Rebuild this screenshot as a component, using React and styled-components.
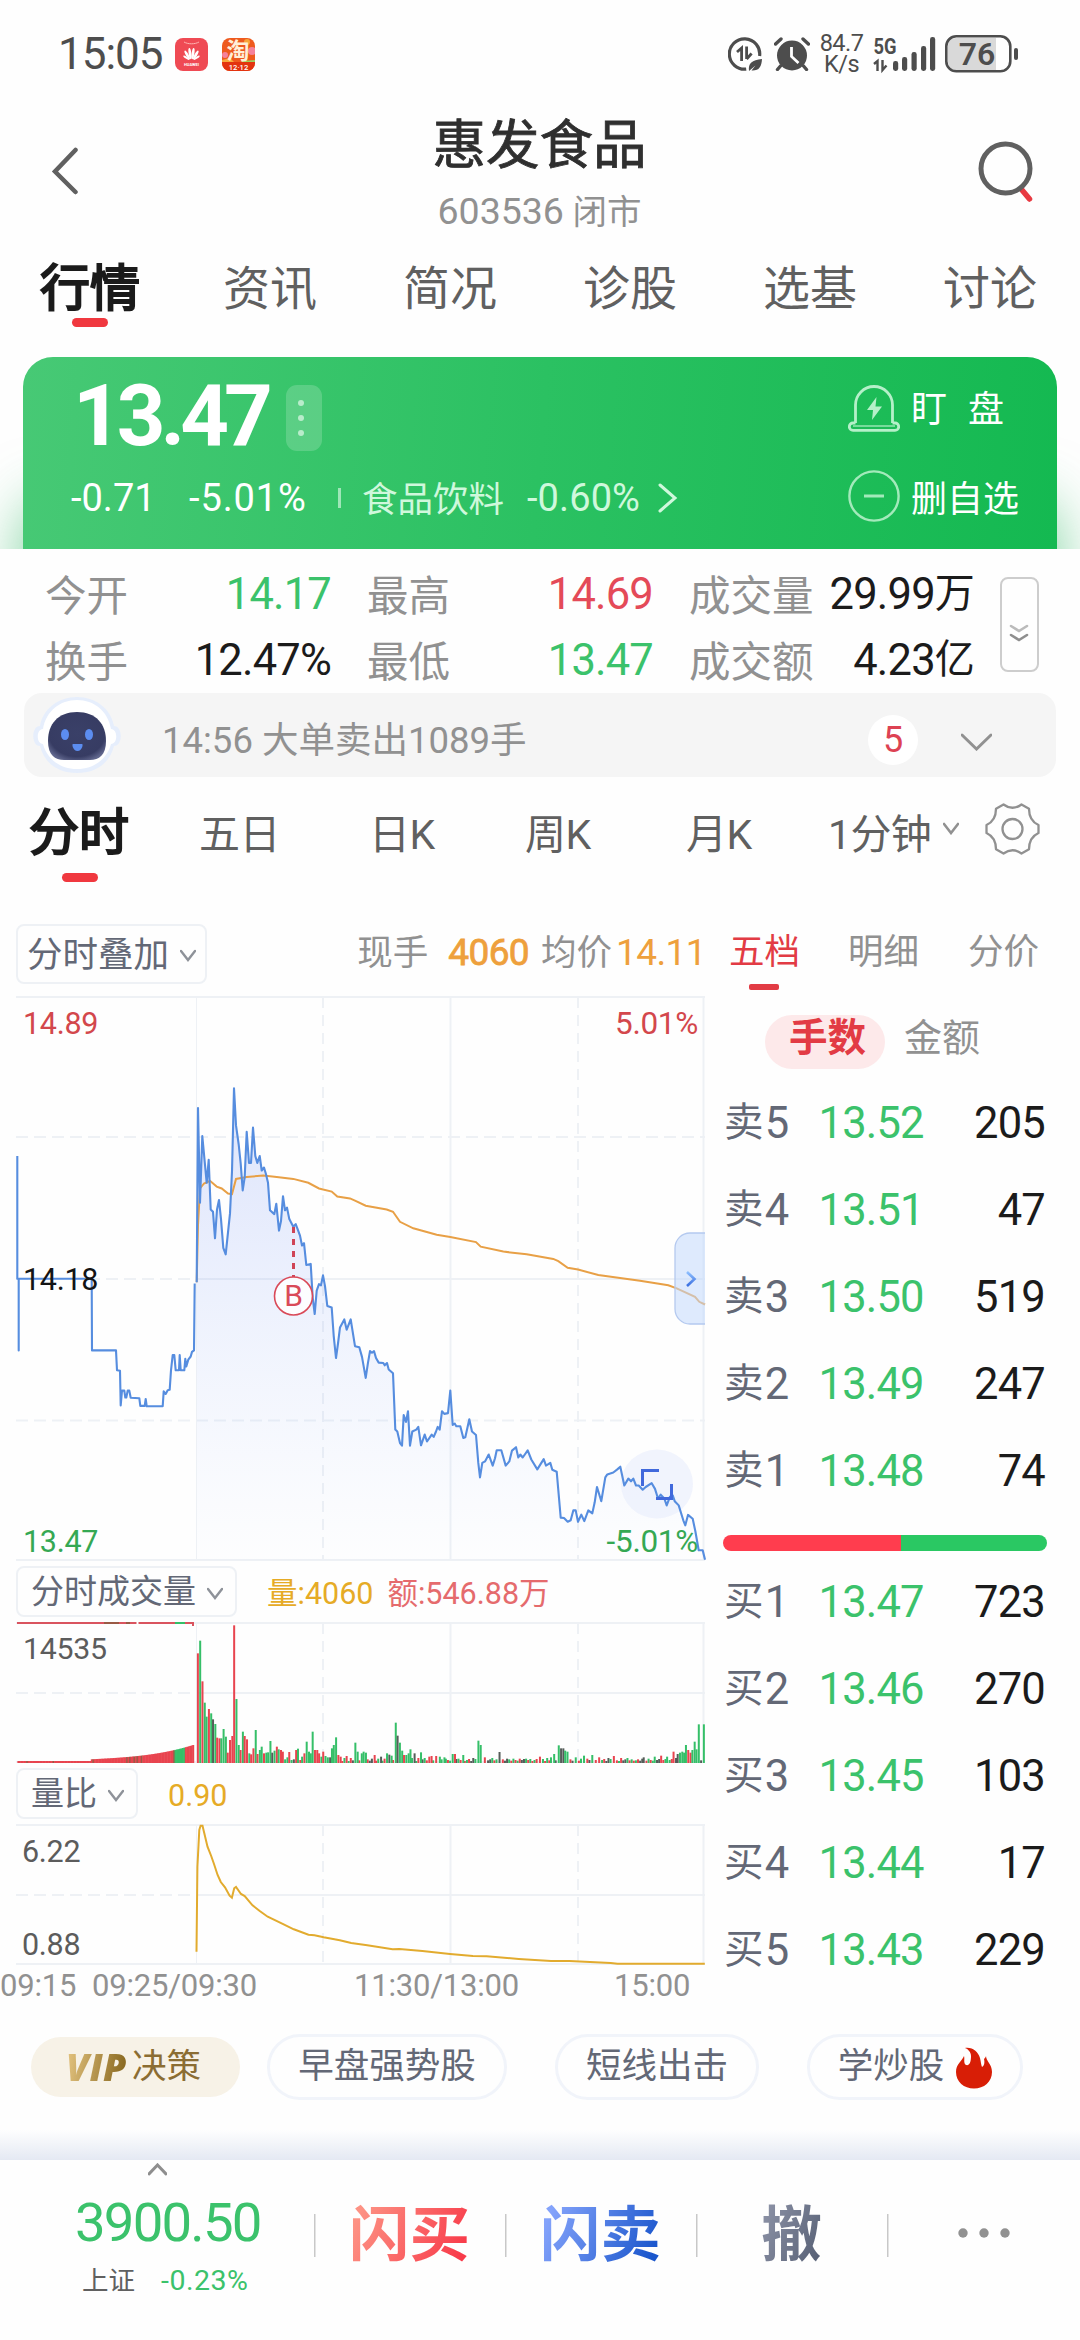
import React, { useState } from "react";
import styled, { createGlobalStyle } from "styled-components";

const RED = "#e23b44";
const GREEN = "#3bc26b";
const GRAY = "#919191";
const SLATE = "#636876";
const INK = "#1b1b1b";

const GlobalStyle = createGlobalStyle`
  * { box-sizing: border-box; }
  body {
    margin: 0;
    background: #fefefe;
    font-family: Roboto, "Noto Sans CJK SC", sans-serif;
    color: ${INK};
  }
  svg { display: block; flex: none; }
`;

const Screen = styled.div`
  width: 1080px;
  height: 2340px;
  display: flex;
  flex-direction: column;
  overflow: hidden;
  white-space: nowrap;
`;

/* ---------- status bar ---------- */

const StatusBar = styled.div`
  height: 108px;
  padding: 0 61px 0 58px;
  display: flex;
  align-items: center;
  color: #4d4d4d;
`;

const Clock = styled.span`
  width: 117px;
  font-size: 44px;
  letter-spacing: -1px;
  line-height: 50px;
`;

const AppIcons = styled.div`
  display: flex;
  gap: 14px;
`;

const StatusIcons = styled.div`
  margin-left: auto;
  display: flex;
  align-items: center;
`;

const NetSpeed = styled.div`
  width: 63px;
  text-align: center;
  font-size: 23.5px;
  line-height: 21.5px;
  letter-spacing: -0.5px;
`;

const HuaweiIcon = () => (
  <svg width="33" height="33" viewBox="0 0 33 33">
    <rect width="33" height="33" rx="8" fill="#ef4a54" />
    <path d="M9 4c4 2.4 11 2.4 15 0" fill="none" stroke="#ffb3b0" strokeWidth="1" />
    <g fill="#fff">
      <ellipse cx="15" cy="15.600" rx="1.400" ry="5.600" transform="rotate(-8 15 15.600)" />
      <ellipse cx="18" cy="15.600" rx="1.400" ry="5.600" transform="rotate(8 18 15.600)" />
      <ellipse cx="12.200" cy="17" rx="1.300" ry="5" transform="rotate(-30 12.200 17)" />
      <ellipse cx="20.800" cy="17" rx="1.300" ry="5" transform="rotate(30 20.800 17)" />
      <ellipse cx="11.300" cy="19.800" rx="1" ry="3.600" transform="rotate(-55 11.300 19.800)" />
      <ellipse cx="21.700" cy="19.800" rx="1" ry="3.600" transform="rotate(55 21.700 19.800)" />
    </g>
    <text x="16.5" y="28" fontSize="4" fontWeight="700" textAnchor="middle" fill="#fff">
      HUAWEI
    </text>
  </svg>
);

const TaobaoIcon = () => (
  <svg width="33" height="33" viewBox="0 0 33 33">
    <rect width="33" height="33" rx="8" fill="#ee5a1e" />
    <circle cx="30" cy="13" r="4" fill="#f5829b" />
    <circle cx="25" cy="4" r="3" fill="#f7a63a" />
    <circle cx="3" cy="17" r="3" fill="#f5829b" />
    <path d="M0 24h33v1a8 8 0 0 1-8 8H8a8 8 0 0 1-8-8z" fill="#e3330f" />
    <path d="M0 22l8-2 4 4H0z" fill="#f9a93c" />
    <path d="M20 23l13-1v2H20z" fill="#9ccf5f" />
    <text x="16" y="20.5" fontSize="23" fontWeight="700" textAnchor="middle" fill="#fff0d8">
      淘
    </text>
    <text x="16.5" y="31.6" fontSize="7.6" fontWeight="500" textAnchor="middle" fill="#fff">
      12·12
    </text>
  </svg>
);

const DataSaverIcon = () => (
  <svg width="34" height="34" viewBox="0 0 34 34">
    <path d="M31.6 19a15.2 15.2 0 1 0-13.4 13.1" fill="none" stroke="#4d4d4d" strokeWidth="3.2" />
    <path
      d="M9 15l4.6-4V24M18.600 9.600v12.400M18.600 22l5-5.500"
      fill="none"
      stroke="#4d4d4d"
      strokeWidth="2.8"
    />
    <path d="M21 34c-1-8 3-11 13-12-.5 8-3 12-10.500 11.500l4-5z" fill="#4d4d4d" />
  </svg>
);

const AlarmIcon = () => (
  <svg width="36" height="34" viewBox="0 0 36 34">
    <circle cx="18" cy="18.500" r="15" fill="#4d4d4d" />
    <path
      d="M1.600 7L7 2M34.400 7L29 2M6.500 29l-3 3.500M29.500 29l3 3.500"
      stroke="#4d4d4d"
      strokeWidth="3.400"
      strokeLinecap="round"
    />
    <path d="M17.500 10v9.500l7 6.500" fill="none" stroke="#fff" strokeWidth="2.800" />
  </svg>
);

const SIGNAL_BARS = [
  [20, 24],
  [29, 20],
  [38.5, 15],
  [48, 9],
  [57, 0],
];

const SignalIcon = () => (
  <svg width="64" height="34" viewBox="0 0 64 34" overflow="visible">
    <text x="0.500" y="16.500" fontSize="22" fontWeight="700" fill="#4d4d4d" textLength="23" lengthAdjust="spacingAndGlyphs">
      5G
    </text>
    <path d="M1 27l3.500-3v10M9.500 23v10l4-4.500" fill="none" stroke="#4d4d4d" strokeWidth="2.400" />
    {SIGNAL_BARS.map(([x, top]) => (
      <rect key={x} x={x} y={top} width="5.200" height={34 - top} rx="2.400" fill="#4d4d4d" />
    ))}
  </svg>
);

const BatteryIcon = () => (
  <svg width="74" height="38" viewBox="0 0 74 38">
    <path d="M11 3h40v32H11a8 8 0 0 1-8-8V11a8 8 0 0 1 8-8z" fill="#d9d9d9" />
    <rect x="1.300" y="1.300" width="64" height="35" rx="10" fill="none" stroke="#4d4d4d" strokeWidth="2.600" />
    <rect x="69" y="13" width="4" height="12" rx="2" fill="#4d4d4d" />
    <text x="32" y="30" fontSize="32" fontWeight="600" textAnchor="middle" fill="#4d4d4d">
      76
    </text>
  </svg>
);

/* ---------- header ---------- */

const Header = styled.header`
  height: 132px;
  padding: 0 44px 0 48px;
  display: flex;
  justify-content: space-between;
`;

const IconButton = styled.button`
  width: 60px;
  height: 132px;
  padding: ${(p) => p.$pad || "0"};
  border: 0;
  background: none;
`;

const TitleBlock = styled.div`
  width: 400px;
  padding: 6px 5px 0 0;
  text-align: center;
`;

const StockName = styled.h1`
  margin: 0;
  font-size: 53.5px;
  font-weight: 400;
  line-height: 63px;
  color: #2f2f2f;
  -webkit-text-stroke: 0.8px #2f2f2f;
`;

const StockCode = styled.div`
  font-size: 34.5px;
  line-height: 69px;
  color: ${GRAY};

  span {
    font-size: 37.5px;
  }
`;

/* ---------- section tabs ---------- */

const SectionTabs = styled.nav`
  height: 103px;
  display: grid;
  grid-template-columns: repeat(6, 1fr);
`;

const SectionTab = styled.div`
  position: relative;
  padding-top: 13px;
  text-align: center;
  font-size: ${(p) => (p.$active ? "50px" : "47px")};
  line-height: 72px;
  color: ${(p) => (p.$active ? INK : "#606060")};
  -webkit-text-stroke: ${(p) => (p.$active ? "2.2px" : "0")} ${INK};

  &::after {
    content: "";
    display: ${(p) => (p.$active ? "block" : "none")};
    position: absolute;
    left: 72px;
    top: 78px;
    width: 36px;
    height: 9px;
    border-radius: 5px;
    background: #f0383f;
  }
`;

/* ---------- quote card ---------- */

const QuoteArea = styled.section`
  height: 206px;
  padding: 14px 23px 0;
  overflow: hidden;
`;

const QuoteCard = styled.div`
  height: 192px;
  display: flex;
  justify-content: space-between;
  border-radius: 30px 30px 0 0;
  background: linear-gradient(95deg, #47c975 0%, #2bc162 50%, #14b951 100%);
  box-shadow: 0 145px 60px rgba(35, 180, 90, 0.6);
  color: #fff;
`;

const QuoteMain = styled.div`
  padding: 20px 0 0 48px;
`;

const PriceLine = styled.div`
  height: 78px;
  display: flex;
  align-items: center;
`;

const LastPrice = styled.span`
  width: 215px;
  padding-left: 2px;
  font-size: 85px;
  font-weight: 700;
  letter-spacing: -5px;
  line-height: 78px;
`;

const MoreButton = styled.button`
  width: 36px;
  height: 66px;
  padding: 0 0 0 12px;
  margin-top: 4px;
  border: 0;
  border-radius: 11px;
  background: rgba(255, 255, 255, 0.18);
`;

const ChangeLine = styled.div`
  height: 86px;
  display: flex;
  align-items: center;
  font-size: 38px;
  letter-spacing: 0.1px;

  svg {
    margin-left: 18px;
  }
`;

const ChangeValue = styled.span`
  width: ${(p) => p.$w}px;
  letter-spacing: ${(p) => p.$ls || 0}px;
`;

const SectorName = styled.span`
  padding: 0 0 3px 24px;
  margin-right: 23px;
  font-size: 35.5px;
  letter-spacing: 0;
  color: #cff8dc;
  background: linear-gradient(#9fe6b8, #9fe6b8) no-repeat 0 center / 3px 20px;
`;

const SectorChange = styled.span`
  color: #cff8dc;
`;

const QuoteActions = styled.div`
  width: 209px;
  padding-top: 20px;
`;

const QuoteAction = styled.div`
  height: ${(p) => p.$h}px;
  display: flex;
  align-items: center;
  gap: 11px;
  font-size: 36px;
  word-spacing: ${(p) => p.$gap || 0}px;

  span {
    padding-bottom: ${(p) => p.$lift}px;
  }
`;

/* ---------- day stats ---------- */

const Stats = styled.section`
  height: 144px;
  padding: 13px 41px 0 45px;
  display: flex;
`;

const StatColumn = styled.div`
  width: ${(p) => p.$w}px;
  margin-right: ${(p) => p.$gap}px;
`;

const Stat = styled.div`
  height: 66px;
  display: flex;
  justify-content: space-between;
  align-items: center;
`;

const StatLabel = styled.span`
  padding-bottom: 5px;
  font-size: 41.5px;
  color: ${GRAY};
`;

const StatValue = styled.span`
  font-size: 43.5px;
  line-height: 60px;
  letter-spacing: -0.8px;
  color: ${(p) => p.$color || INK};

  small {
    font-size: 40px;
    line-height: 1;
    vertical-align: 2px;
  }
`;

const ExpandButton = styled.button`
  width: 39px;
  height: 95px;
  margin: 15px 0 0 auto;
  padding: 16px 0 0 6px;
  border: 2.5px solid #cdcdcd;
  border-radius: 8px;
  background: none;
`;

/* ---------- alert strip ---------- */

const AlertStrip = styled.section`
  flex: none;
  height: 84px;
  margin: 0 24px;
  padding: 0 64px 0 8px;
  display: flex;
  align-items: center;
  border-radius: 18px;
  background: #f5f5f5;

  svg:last-child {
    margin-top: 14px;
  }
`;

const AlertText = styled.span`
  flex: 1;
  padding: 5px 0 0 40px;
  font-size: 36.5px;
  color: ${GRAY};
`;

const AlertCount = styled.span`
  width: 50px;
  height: 50px;
  margin: 10px 43px 0 0;
  border-radius: 25px;
  background: #fff;
  text-align: center;
  font-size: 36px;
  line-height: 50px;
  color: #dd4253;
`;

/* ---------- period tabs ---------- */

const PeriodTabs = styled.nav`
  flex: none;
  height: 123px;
  padding-left: 29px;
  display: grid;
  grid-template-columns: 170px 170px 156px 161px 142px 115px 42px 1fr;
`;

const PeriodTab = styled.div`
  position: relative;
  padding-top: ${(p) => (p.$active ? 20 : 22)}px;
  font-size: ${(p) => (p.$active ? "50px" : "41px")};
  letter-spacing: ${(p) => (p.$active ? 0 : -0.6)}px;
  line-height: 72px;
  color: ${(p) => (p.$active ? INK : "#606060")};
  -webkit-text-stroke: ${(p) => (p.$active ? "2.2px" : "0")} ${INK};

  &::after {
    content: "";
    display: ${(p) => (p.$active ? "block" : "none")};
    position: absolute;
    left: 33px;
    top: 96px;
    width: 36px;
    height: 9px;
    border-radius: 5px;
    background: #f0383f;
  }
`;

const PeriodIcon = styled.div`
  padding-top: ${(p) => p.$top}px;
`;

/* ---------- chart column ---------- */

const Body = styled.main`
  flex: none;
  height: 1112px;
  display: grid;
  grid-template-columns: 706px 1fr;
`;

const ChartColumn = styled.section`
  display: flex;
  flex-direction: column;
`;

const ChartToolbar = styled.div`
  height: ${(p) => p.$h}px;
  padding: ${(p) => (p.$h === 96 ? "24px" : "4px")} 0 0 16px;
  display: flex;
  align-items: flex-start;
`;

const Dropdown = styled.button`
  width: ${(p) => p.$w}px;
  height: ${(p) => (p.$large ? 60 : 51)}px;
  padding: 0 ${(p) => (p.$large ? 9 : 12)}px 0 ${(p) => (p.$large ? 9 : 13)}px;
  display: flex;
  align-items: center;
  justify-content: space-between;
  border: 2px solid #eef1f5;
  border-radius: 8px;
  background: none;
  font-family: inherit;
  font-size: ${(p) => (p.$large ? 35.5 : 33)}px;
  color: ${SLATE};

  span {
    padding-bottom: 5px;
  }

  svg {
    margin-top: 3px;
  }
`;

const Legend = styled.div`
  margin-left: ${(p) => p.$left}px;
  font-size: 35.5px;
  line-height: ${(p) => (p.$small ? 52 : 58)}px;
  color: ${GRAY};
`;

const LegendNumber = styled.span`
  font-size: 37px;
  letter-spacing: -0.6px;
  -webkit-text-stroke: ${(p) => (p.$strong ? 0.8 : 0)}px #eea03c;
  color: #eea03c;
  margin: 0 ${(p) => (p.$strong ? 12 : 0)}px 0 ${(p) => (p.$strong ? 20 : 4)}px;
`;

const IndicatorValue = styled.span`
  margin-right: 14px;
  font-size: 30.5px;
  color: ${(p) => p.$color};
`;

const TimeAxis = styled.div`
  padding-top: 1px;
  display: grid;
  grid-template-columns: 92px 262px 260px 1fr;
  font-size: 31px;
  line-height: 38px;
  letter-spacing: -0.2px;
  color: ${GRAY};
`;

const ChartLabel = styled.text`
  font-size: ${(p) => p.$size || 30.5}px;
  letter-spacing: -0.3px;
  fill: ${(p) => p.$color};
  text-anchor: ${(p) => p.$anchor || "start"};
`;

const GRID_X = [196.5, 323, 450.5, 578, 703.5];

// samples are kept on an oversampled grid, sx/sy bring them to pixels
const toPoints = (samples, sx, sy, oy) =>
  samples.map(([x, y]) => `${(x / sx).toFixed(1)},${((y - oy) / sy).toFixed(1)}`).join(" ");

const AUCTION = [
  [52, 460], [52, 781], [56, 781], [56, 968], [56, 781], [275, 781], [276, 968], [348, 968],
  [351, 1020], [360, 1021], [362, 1112], [366, 1073], [373, 1073], [376, 1091], [379, 1091],
  [383, 1073], [388, 1073], [392, 1092], [418, 1093], [421, 1113], [434, 1113], [437, 1095],
  [440, 1114], [488, 1114], [491, 1075], [497, 1082], [503, 1072], [509, 1071], [513, 1020],
  [518, 980], [523, 980], [527, 1020], [537, 1020], [539, 980], [542, 1020], [553, 1020],
  [556, 990], [559, 1010], [565, 992], [572, 984], [576, 972], [582, 968], [584, 793],
];

const MORNING = [
  [590, 790], [594, 335], [600, 582], [607, 408], [620, 530], [626, 470], [632, 600], [639, 606],
  [645, 675], [651, 600], [657, 575], [663, 625], [670, 700], [677, 717], [690, 610], [696, 500],
  [702, 283], [708, 380], [716, 430], [722, 480], [728, 550], [734, 515], [740, 397], [747, 478],
  [753, 478], [759, 386], [766, 460], [772, 478], [779, 460], [785, 498], [792, 490], [798, 508],
  [804, 530], [810, 602], [823, 612], [829, 585], [837, 655], [843, 630], [849, 565], [855, 602],
  [861, 595], [868, 625], [880, 645], [887, 638], [893, 652], [900, 668], [906, 694], [912, 688],
  [919, 745], [932, 742], [938, 830], [944, 873], [950, 812], [957, 795], [963, 798], [969, 772],
  [975, 800], [982, 852], [995, 856], [1001, 930], [1008, 988], [1014, 950], [1020, 908],
  [1033, 887], [1040, 914], [1052, 887],
];

const LATE = [
  [45, 957], [58, 960], [66, 985], [77, 1040], [84, 1000], [90, 970], [96, 974], [102, 970],
  [108, 988], [116, 1000], [130, 1001], [134, 1007], [141, 1001], [146, 1018], [159, 1028],
  [166, 1175], [172, 1180], [180, 1210], [186, 1217], [191, 1137], [198, 1155], [204, 1127],
  [210, 1217], [217, 1180], [229, 1175], [235, 1168], [243, 1216], [254, 1188], [261, 1206],
  [275, 1188], [281, 1194], [288, 1180], [293, 1168], [299, 1175], [306, 1127], [313, 1134],
  [324, 1132], [331, 1073], [338, 1163], [344, 1159], [349, 1166], [361, 1166], [370, 1197],
  [376, 1195], [388, 1148], [396, 1180], [408, 1189], [415, 1262], [420, 1300], [427, 1262],
  [435, 1258], [446, 1240], [458, 1269], [465, 1250], [470, 1229], [484, 1229], [497, 1269],
  [508, 1258], [516, 1230], [528, 1221], [535, 1248], [541, 1240], [548, 1248], [563, 1229],
  [574, 1253], [592, 1279], [611, 1252], [618, 1269], [631, 1262], [637, 1280], [650, 1285],
  [656, 1345], [662, 1405], [672, 1406], [683, 1416], [692, 1412], [700, 1386], [707, 1386],
  [714, 1416], [724, 1397], [733, 1414], [745, 1386], [757, 1394], [764, 1365], [771, 1325],
  [784, 1362], [796, 1300], [802, 1292], [820, 1287], [832, 1279], [841, 1272], [853, 1321],
  [865, 1303], [873, 1310], [880, 1303], [888, 1321], [896, 1321], [908, 1332], [917, 1325],
  [935, 1315], [945, 1330], [954, 1355], [962, 1345], [973, 1355], [980, 1373], [990, 1350],
  [998, 1347], [1004, 1362], [1016, 1373], [1030, 1412], [1036, 1425], [1044, 1398], [1058, 1408],
  [1066, 1440], [1076, 1490], [1088, 1490], [1095, 1515],
].map(([x, y]) => [x + 1020, y]);

const AVERAGE = [
  [590, 790], [594, 640], [600, 545], [612, 532], [630, 525], [650, 540], [665, 545], [684, 558],
  [696, 560], [708, 520], [740, 515], [790, 511], [830, 515], [880, 520], [925, 530], [957, 545],
  [995, 553], [1012, 566], [1050, 571], [1065, 577], [1097, 590], [1160, 600], [1179, 606],
  [1200, 632], [1240, 649], [1310, 666], [1351, 672], [1428, 685], [1442, 697], [1510, 710],
  [1580, 717], [1660, 729], [1675, 735], [1703, 752], [1734, 757], [1795, 771], [1920, 786],
  [2005, 798], [2030, 806], [2085, 828], [2098, 841], [2115, 848],
];

const RATIO = [
  [428, 1175], [430, 920], [434, 810], [437, 797], [441, 797], [445, 820], [452, 860], [460, 888],
  [466, 912], [474, 945], [481, 966], [490, 982], [500, 1007], [505, 1013], [510, 985], [514, 981],
  [525, 1002], [533, 1008], [550, 1036], [565, 1052], [583, 1070], [610, 1088], [640, 1108],
  [672, 1124], [685, 1126], [705, 1132], [740, 1141], [765, 1149], [800, 1156], [855, 1168],
  [870, 1167], [920, 1173], [980, 1182], [1030, 1188], [1060, 1189], [1130, 1197], [1200, 1203],
  [1240, 1203], [1330, 1209], [1345, 1211], [1535, 1211],
];

// [x, top, colour] of the minutes with notable turnover
const PEAKS = [
  [431, 280, "r"], [436, 242, "g"], [441, 364, "r"], [446, 428, "g"], [450, 470, "g"],
  [455, 447, "r"], [460, 460, "g"], [464, 478, "k"], [469, 492, "g"], [473, 533, "r"],
  [478, 535, "r"], [482, 535, "g"], [487, 507, "g"], [492, 530, "g"], [496, 578, "r"],
  [501, 540, "r"], [506, 528, "r"], [510, 196, "r"], [515, 417, "g"], [520, 555, "g"],
  [524, 570, "r"], [529, 515, "g"], [533, 528, "r"], [538, 538, "r"], [543, 580, "g"],
  [547, 583, "r"], [552, 565, "r"], [557, 510, "g"], [561, 582, "r"], [566, 570, "g"],
  [570, 560, "g"], [575, 580, "r"], [580, 578, "g"], [584, 577, "g"], [589, 543, "g"],
  [593, 578, "k"], [598, 572, "g"], [603, 560, "r"], [607, 568, "g"], [612, 570, "r"],
  [616, 575, "r"], [621, 598, "g"], [626, 592, "g"], [630, 576, "r"], [635, 600, "g"],
  [640, 598, "k"], [645, 570, "r"], [649, 566, "g"], [654, 600, "r"], [658, 590, "g"],
  [663, 580, "r"], [668, 545, "g"], [673, 575, "g"], [677, 580, "g"], [681, 515, "g"],
  [686, 570, "r"], [691, 570, "r"], [695, 580, "r"], [700, 590, "g"], [704, 575, "r"],
  [709, 588, "g"], [714, 592, "g"], [719, 592, "k"], [723, 565, "g"], [727, 555, "g"],
  [732, 532, "g"], [737, 585, "r"], [742, 590, "r"], [755, 588, "r"], [774, 548, "g"],
  [779, 575, "g"], [788, 580, "g"], [792, 575, "g"], [797, 578, "g"], [816, 585, "r"],
  [830, 590, "k"], [843, 580, "g"], [848, 584, "k"], [853, 587, "g"], [862, 488, "g"],
  [866, 527, "k"], [871, 548, "g"], [876, 572, "g"], [880, 585, "r"], [885, 585, "g"],
  [890, 580, "g"], [894, 568, "g"], [903, 580, "k"], [917, 577, "g"], [935, 590, "r"],
  [940, 588, "r"], [950, 588, "r"], [958, 590, "g"], [968, 592, "g"], [986, 582, "g"],
  [991, 582, "r"], [1009, 585, "g"], [1042, 542, "g"], [1047, 555, "g"], [1056, 592, "r"],
  [1088, 576, "k"], [1176, 590, "r"], [1200, 592, "g"], [1207, 582, "g"], [1217, 556, "g"],
  [1222, 565, "k"], [1227, 565, "k"], [1231, 572, "g"], [1236, 575, "g"], [1254, 592, "g"],
  [1272, 587, "g"], [1290, 585, "g"], [1305, 592, "r"], [1337, 588, "r"], [1402, 592, "k"],
  [1426, 590, "g"], [1440, 587, "r"], [1453, 590, "g"], [1467, 575, "r"], [1476, 582, "k"],
  [1481, 578, "g"], [1486, 575, "g"], [1490, 578, "g"], [1494, 555, "g"], [1499, 570, "r"],
  [1504, 578, "r"], [1508, 570, "g"], [1513, 545, "g"], [1517, 568, "g"], [1522, 493, "g"],
  [1527, 601, "k"], [1533, 493, "g"],
];

const BAR_COLORS = { r: "#e8444f", g: "#35bf68", k: "#555d59", b: "#9a5a45" };

const QUIET_TOPS = [597, 602, 594, 600, 598, 603, 596, 601];
const QUIET_COLORS = "grrgkrgrgkrg";

const quietBars = () => {
  const bars = [];
  for (let i = 0, x = 741; x < 1475; i += 1, x += 4.6) {
    if (!PEAKS.some((p) => Math.abs(p[0] - x) < 3)) {
      bars.push([x, QUIET_TOPS[(i * 5 + (i >> 2)) % 8], QUIET_COLORS[(i * 7 + (i >> 1)) % 12]]);
    }
  }
  return bars;
};

const auctionBars = () => {
  const bars = [];
  for (let x = 40; x < 423; x += 3.2) {
    const t = Math.max(0, (x - 198) / 223);
    const top = x < 198 ? 603 : 598 - t * 16 - t * t * t * 27;
    let color = "r";
    if (x > 380 && x < 402) color = "g";
    else if ((x > 268 && x < 312) || x % 29 < 3) color = Math.round(x) % 2 ? "b" : "r";
    bars.push([x, top, color]);
  }
  return bars;
};

const VOLUME = [...auctionBars(), ...quietBars(), ...PEAKS];

function ChartGrid({ height, rows, dashedMiddle }) {
  return (
    <g stroke="#eef1f5" strokeWidth="2">
      <path d={`M16 1H705M16 ${height - 2}H705`} />
      {GRID_X.map((x, i) => (
        <path
          key={x}
          d={`M${x} 1V${height - 1}`}
          strokeDasharray={i === 1 || i === 3 ? "11 7" : undefined}
          strokeWidth={i === 0 ? 1 : 2}
        />
      ))}
      {rows.map((y, i) => (
        <React.Fragment key={y}>
          <path d={`M16 ${y}H196`} strokeDasharray="12 6" />
          <path d={`M196 ${y}H705`} strokeDasharray={dashedMiddle && i !== 1 ? "12 6" : undefined} />
        </React.Fragment>
      ))}
    </g>
  );
}

function PriceChart() {
  const session = toPoints([...MORNING, ...LATE], 3, 2.613, 42);
  return (
    <svg width="706" height="566" viewBox="0 0 706 566">
      <defs>
        <linearGradient id="priceFill" gradientUnits="userSpaceOnUse" x1="0" y1="100" x2="0" y2="560">
          <stop offset="0" stopColor="#5b7cf0" stopOpacity="0.2" />
          <stop offset="1" stopColor="#7fa6ff" stopOpacity="0.01" />
        </linearGradient>
        <linearGradient id="handleArrow" x1="0" y1="0" x2="0" y2="1">
          <stop offset="0" stopColor="#8fc0ff" />
          <stop offset="1" stopColor="#3a6fe0" />
        </linearGradient>
      </defs>
      <ChartGrid height={566} rows={[141, 283, 424.5]} dashedMiddle />
      <polygon points={`197,564 ${session} 705,564`} fill="url(#priceFill)" />
      <polyline points={toPoints(AVERAGE, 3, 2.613, 42)} fill="none" stroke="#e8a046" strokeWidth="2" />
      <ellipse cx="657" cy="488" rx="36" ry="34.500" fill="#e9eefc" fillOpacity="0.65" />
      <g fill="none" stroke="#568ddf" strokeWidth="2.1" strokeLinejoin="round">
        <polyline points={toPoints(AUCTION, 3, 2.613, 42)} />
        <polyline points={session} />
      </g>
      <path d="M642.500 490V474.500H659M656 502.500H671.500V488" fill="none" stroke="#4169dc" strokeWidth="3" />
      <path
        d="M705 237H690a15 15 0 0 0-15 15v61a15 15 0 0 0 15 15h15"
        fill="#c3d8fb"
        fillOpacity="0.55"
        stroke="#b4c9ef"
        strokeWidth="1.300"
      />
      <path d="M687 276l7.500 7-7.500 7" fill="none" stroke="url(#handleArrow)" strokeWidth="2.600" />
      <path d="M293.500 231V281" stroke="#cf4456" strokeWidth="3" strokeDasharray="6 6" />
      <circle cx="293.500" cy="300" r="19" fill="#fff" fillOpacity="0.85" stroke="#d94a59" strokeWidth="1.600" />
      <ChartLabel x="293.500" y="310" $size={30} $anchor="middle" $color="#d94a59">B</ChartLabel>
      <ChartLabel x="23" y="38" $color="#d3474c">14.89</ChartLabel>
      <ChartLabel x="23" y="294" $color="#141414">14.18</ChartLabel>
      <ChartLabel x="23" y="556" $color="#35a853">13.47</ChartLabel>
      <ChartLabel x="698" y="38" $size={31.5} $anchor="end" $color="#d3474c">5.01%</ChartLabel>
      <ChartLabel x="698" y="556" $size={31.5} $anchor="end" $color="#35a853">-5.01%</ChartLabel>
    </svg>
  );
}

function VolumeChart() {
  return (
    <svg width="706" height="142" viewBox="0 0 706 142">
      <ChartGrid height={142} rows={[71]} />
      {VOLUME.map(([x, top, color], i) => (
        <rect
          key={i}
          x={x / 2.178 - 1}
          y={(top - 186) / 3}
          width="2"
          height={(609 - top) / 3}
          fill={BAR_COLORS[color]}
        />
      ))}
      <g strokeWidth="2" fill="none">
        <path d="M17 1H193V4" stroke="#d9545f" />
        <path d="M104 1h15M126 1h4" stroke="#9a5a45" />
        <path d="M175 1h10" stroke="#35bf68" />
        <path d="M136.500 1h2" stroke="#fff" />
      </g>
      <ChartLabel x="23" y="37" $size={30.3} $color="#5c5c5c">14535</ChartLabel>
    </svg>
  );
}

function RatioChart() {
  return (
    <svg width="706" height="142" viewBox="0 0 706 142">
      <ChartGrid height={142} rows={[71]} />
      <polyline points={toPoints(RATIO, 2.178, 3, 792)} fill="none" stroke="#e2ab2e" strokeWidth="2" />
      <ChartLabel x="22" y="38" $color="#5c5c5c">6.22</ChartLabel>
      <ChartLabel x="22" y="131" $color="#5c5c5c">0.88</ChartLabel>
    </svg>
  );
}

/* ---------- order book ---------- */

const OrderBook = styled.section`
  display: flex;
  flex-direction: column;
  padding: 0 33px 0 17px;
`;

const BookTabs = styled.div`
  height: 104px;
  padding-left: 6px;
  display: grid;
  grid-template-columns: 119px 120px 1fr;
`;

const BookTab = styled.div`
  position: relative;
  font-size: 35.5px;
  line-height: 104px;
  color: ${(p) => (p.$active ? RED : GRAY)};

  &::after {
    content: "";
    display: ${(p) => (p.$active ? "block" : "none")};
    position: absolute;
    left: 20px;
    top: 84px;
    width: 30px;
    height: 6px;
    border-radius: 2px;
    background: ${RED};
  }
`;

const UnitSwitch = styled.div`
  height: 76px;
  padding: 11px 0 0 42px;
  display: flex;
  gap: 19px;
`;

const Unit = styled.span`
  height: 54px;
  padding: 0 ${(p) => (p.$active ? 24 : 0)}px;
  width: ${(p) => (p.$active ? "120px" : "auto")};
  border-radius: 27px;
  background: ${(p) => (p.$active ? "#fde9ea" : "none")};
  font-size: ${(p) => (p.$active ? 38.5 : 38)}px;
  font-weight: ${(p) => (p.$active ? 700 : 400)};
  line-height: 46px;
  color: ${(p) => (p.$active ? RED : GRAY)};
`;

const Level = styled.div`
  height: 87px;
  padding-right: 2px;
  display: grid;
  grid-template-columns: 95.5px 1fr auto;
  align-items: center;
  font-size: 43.5px;
  line-height: 60px;
  letter-spacing: -0.8px;
`;

const LevelName = styled.span`
  padding-left: 1px;
  color: ${SLATE};

  small {
    font-size: 39.5px;
    line-height: 1;
    vertical-align: 2px;
    margin-right: 2px;
  }
`;

const LevelPrice = styled.span`
  color: ${GREEN};
`;

const Balance = styled.div`
  height: 16px;
  margin: 20px 0 8.5px;
  border-radius: 8px;
  background: linear-gradient(90deg, #ff3d4e 55%, #2ac863 55%);
`;

const ASKS = [
  [5, "13.52", 205],
  [4, "13.51", 47],
  [3, "13.50", 519],
  [2, "13.49", 247],
  [1, "13.48", 74],
];

const BIDS = [
  [1, "13.47", 723],
  [2, "13.46", 270],
  [3, "13.45", 103],
  [4, "13.44", 17],
  [5, "13.43", 229],
];

const BookLevels = ({ side, levels }) =>
  levels.map(([n, price, lots]) => (
    <Level key={n}>
      <LevelName>
        <small>{side}</small>
        {n}
      </LevelName>
      <LevelPrice>{price}</LevelPrice>
      <span>{lots}</span>
    </Level>
  ));

/* ---------- chips and bottom bar ---------- */

const Chips = styled.section`
  flex: none;
  height: 118px;
  padding: 22px 0 0 31px;
  display: flex;
  align-items: flex-start;
`;

const Chip = styled.div`
  width: ${(p) => p.$w}px;
  height: 66px;
  margin-left: ${(p) => p.$left || 48}px;
  padding-bottom: 3px;
  display: flex;
  align-items: center;
  justify-content: center;
  gap: 12px;
  border: 3px solid #f1f4fa;
  border-radius: 33px;
  font-size: 35.5px;
  line-height: 50px;
  color: ${SLATE};

  svg {
    margin-top: 4px;
  }
`;

const VipChip = styled.div`
  width: 209px;
  height: 60px;
  margin-top: 3px;
  padding: 0 0 3px 35px;
  display: flex;
  align-items: center;
  border-radius: 30px;
  background: #f7f2e7;
  font-size: 34.5px;
  line-height: 50px;
  color: #8b6d33;
`;

const VipMark = styled.b`
  width: 66px;
  padding: 2px 3px 0 0;
  font-family: "Open Sans", sans-serif;
  font-size: 37.5px;
  font-weight: 800;
  font-style: italic;
  letter-spacing: 0.3px;
  background: linear-gradient(100deg, #e2c27e 5%, #8a6a22 85%);
  -webkit-background-clip: text;
  background-clip: text;
  color: transparent;
`;

const Fade = styled.div`
  flex: none;
  height: 30px;
  background: linear-gradient(#fefefe, #e4e9f3);
`;

const BottomBar = styled.footer`
  flex: none;
  height: 180px;
  display: grid;
  grid-template-columns: 314px 191px 191px 191px 1fr;
`;

const IndexQuote = styled.div`
  padding: 3px 0 0 75px;
`;

const IndexCaret = styled.div`
  height: 26px;
  padding-left: 73px;
`;

const IndexValue = styled.div`
  font-size: 54.5px;
  letter-spacing: -1.8px;
  line-height: 66px;
  color: ${GREEN};
`;

const IndexInfo = styled.div`
  padding-left: 7px;
  display: flex;
  gap: 26px;
  font-size: 26.5px;
  line-height: 52px;
  color: #606060;

  span {
    font-size: 28.5px;
    letter-spacing: 0.5px;
    color: ${GREEN};
  }
`;

const TradeCell = styled.div`
  padding-bottom: ${(p) => (p.$menu ? 34 : 29)}px;
  display: flex;
  align-items: center;
  justify-content: center;
  background: linear-gradient(#c8c8c8, #c8c8c8) no-repeat 0 54px / 1.5px 43px;
`;

const TradeButton = styled.span`
  font-size: 60.5px;
  font-weight: 700;
  line-height: 70px;
  background: linear-gradient(115deg, ${(p) => p.$from} 10%, ${(p) => p.$to} 90%);
  -webkit-background-clip: text;
  background-clip: text;
  color: transparent;
`;

/* ---------- small icons ---------- */

const Caret = ({ w = 16, h = 9, color = "#8e9299", stroke = 2.4, up }) => (
  <svg width={w} height={h + 4} viewBox={`0 0 ${w} ${h + 4}`}>
    <path
      d={up ? `M1 ${h + 2}L${w / 2} 2L${w - 1} ${h + 2}` : `M1 2L${w / 2} ${h + 2}L${w - 1} 2`}
      fill="none"
      stroke={color}
      strokeWidth={stroke}
      strokeLinecap="round"
    />
  </svg>
);

const RobotIcon = () => (
  <svg width="90" height="78" viewBox="0 0 90 78">
    <defs>
      <radialGradient id="robotFace" cx="0.5" cy="0.45" r="0.6">
        <stop offset="0" stopColor="#3a4068" />
        <stop offset="0.8" stopColor="#373c63" />
        <stop offset="1" stopColor="#5f658c" />
      </radialGradient>
    </defs>
    <path
      d="M45 1C64 1 79 13 82 30c9 0 9 20 0 20-4 17-18 27-37 27S12 67 8 50c-9 0-9-20 0-20C11 13 26 1 45 1z"
      fill="#e6eefc"
    />
    <path
      d="M45 4C62 4 76 15 79 33c7 0 7 15 0 15-4 15-17 25-34 25S15 63 11 48c-7 0-7-15 0-15C14 15 28 4 45 4z"
      fill="#fff"
    />
    <path
      d="M45 16c19 0 29 12 29 29 0 14-7 19-16 19H32c-9 0-16-5-16-19 0-17 10-29 29-29z"
      fill="url(#robotFace)"
    />
    <ellipse cx="33" cy="38.500" rx="4" ry="5.500" fill="#5c8df0" />
    <ellipse cx="57" cy="38.500" rx="4" ry="5.500" fill="#5c8df0" />
    <path d="M41 48h9c1.500 0 0 7-4.500 7S39.500 48 41 48z" fill="#5c8df0" />
  </svg>
);

const BellIcon = () => (
  <svg width="52" height="48" viewBox="0 0 52 48">
    <g fill="none" stroke="#b5f0c9" strokeWidth="2.800">
      <path d="M7.500 39V21a18.500 18.500 0 0 1 37 0v18" />
      <path d="M7.500 39H5a3.700 3.700 0 0 0 0 7.400h42a3.700 3.700 0 0 0 0-7.400h-2.500" />
      <path d="M5 42h42" strokeWidth="1.600" opacity="0.8" />
    </g>
    <path d="M28.500 13L19 26h6l-1 10 10-13.500h-6.500z" fill="#b5f0c9" />
  </svg>
);

const MinusCircleIcon = () => (
  <svg width="52" height="52" viewBox="0 0 52 52" fill="none" stroke="#a3eabb">
    <circle cx="26" cy="26" r="24.600" strokeWidth="2.400" />
    <path d="M16 26h20" strokeWidth="3" />
  </svg>
);

const GearIcon = () => (
  <svg width="55" height="52" viewBox="0 0 55 52" fill="none" stroke="#919191" strokeWidth="2.300">
    <path
      d="M18.500 1.500c6 4.400 12 4.400 18 0l7.500 4.200c0 8 3 13.300 9.500 16.300v8c-6.500 3-9.500 8.300-9.500 16.300l-7.500 4.200c-6-4.400-12-4.400-18 0L11 46.300C11 38.300 8 33 1.500 30v-8C8 19 11 13.700 11 5.700z"
      strokeLinejoin="round"
    />
    <circle cx="27.500" cy="26" r="10" />
  </svg>
);

const FlameIcon = () => (
  <svg width="36" height="42" viewBox="0 0 36 42">
    <path
      d="M9 1c8-1 13 4 15 10 1 4 1 7 2 9 2-1 3-4 2-8 2-2 2-3 2-3 0 5 6 8 6 16 0 10-8 16.500-18 16.500S0 35 0 25C0 17 6 14 8 9c1 3-1 7 2 9 4 1 5-4 5-9 0-4-3-7-6-8z"
      fill="#d81e06"
    />
  </svg>
);

const SECTIONS = ["行情", "资讯", "简况", "诊股", "选基", "讨论"];
const PERIODS = ["分时", "五日", "日K", "周K", "月K", "1分钟"];
const BOOK_VIEWS = ["五档", "明细", "分价"];
const UNITS = ["手数", "金额"];

export default function App() {
  const [section, setSection] = useState(SECTIONS[0]);
  const [period, setPeriod] = useState(PERIODS[0]);
  const [bookView, setBookView] = useState(BOOK_VIEWS[0]);
  const [unit, setUnit] = useState(UNITS[0]);

  return (
    <Screen>
      <GlobalStyle />
      <StatusBar>
        <Clock>15:05</Clock>
        <AppIcons>
          <HuaweiIcon />
          <TaobaoIcon />
        </AppIcons>
        <StatusIcons>
          <DataSaverIcon />
          <span>&nbsp;&nbsp;&nbsp;</span>
          <AlarmIcon />
          <NetSpeed>
            84.7
            <br />
            K/s
          </NetSpeed>
          <SignalIcon />
          <span>&nbsp;&nbsp;</span>
          <BatteryIcon />
        </StatusIcons>
      </StatusBar>

      <Header>
        <IconButton $pad="0 0 6px 3px">
          <svg width="28" height="48" viewBox="0 0 28 48">
            <path d="M24.500 3L4 24.500 24.500 45" fill="none" stroke="#606060" strokeWidth="4.500" strokeLinecap="round" />
          </svg>
        </IconButton>
        <TitleBlock>
          <StockName>惠发食品</StockName>
          <StockCode>
            <span>603536</span> 闭市
          </StockCode>
        </TitleBlock>
        <IconButton $pad="0 0 7px 1px">
          <svg width="58" height="64" viewBox="0 0 58 64">
            <path d="M45 51l7.500 9" stroke="#e83a42" strokeWidth="5.500" strokeLinecap="round" />
            <circle cx="28.500" cy="29.500" r="24.500" fill="none" stroke="#606060" strokeWidth="5" />
          </svg>
        </IconButton>
      </Header>

      <SectionTabs>
        {SECTIONS.map((name) => (
          <SectionTab key={name} $active={name === section} onClick={() => setSection(name)}>
            {name}
          </SectionTab>
        ))}
      </SectionTabs>

      <QuoteArea>
        <QuoteCard>
          <QuoteMain>
            <PriceLine>
              <LastPrice>13.47</LastPrice>
              <MoreButton>
                <svg width="6" height="38" viewBox="0 0 6 38" fill="#b9eccb">
                  <circle cx="3" cy="4" r="3" />
                  <circle cx="3" cy="19" r="3" />
                  <circle cx="3" cy="34" r="3" />
                </svg>
              </MoreButton>
            </PriceLine>
            <ChangeLine>
              <ChangeValue $w={118}>-0.71</ChangeValue>
              <ChangeValue $w={149} $ls={0.9}>-5.01%</ChangeValue>
              <SectorName>食品饮料</SectorName>
              <SectorChange>-0.60%</SectorChange>
              <svg width="20" height="32" viewBox="0 0 20 32">
                <path d="M2 3l15 13L2 29" fill="none" stroke="#cff8dc" strokeWidth="3" strokeLinecap="round" />
              </svg>
            </ChangeLine>
          </QuoteMain>
          <QuoteActions>
            <QuoteAction $h={62} $gap={12} $lift={5}>
              <BellIcon />
              <span>盯 盘</span>
            </QuoteAction>
            <QuoteAction $h={114} $lift={1}>
              <MinusCircleIcon />
              <span>删自选</span>
            </QuoteAction>
          </QuoteActions>
        </QuoteCard>
      </QuoteArea>

      <Stats>
        <StatColumn $w={286} $gap={36}>
          <Stat>
            <StatLabel>今开</StatLabel>
            <StatValue $color={GREEN}>14.17</StatValue>
          </Stat>
          <Stat>
            <StatLabel>换手</StatLabel>
            <StatValue>12.47%</StatValue>
          </Stat>
        </StatColumn>
        <StatColumn $w={286} $gap={36}>
          <Stat>
            <StatLabel>最高</StatLabel>
            <StatValue $color="#e44a58">14.69</StatValue>
          </Stat>
          <Stat>
            <StatLabel>最低</StatLabel>
            <StatValue $color={GREEN}>13.47</StatValue>
          </Stat>
        </StatColumn>
        <StatColumn $w={285} $gap={0}>
          <Stat>
            <StatLabel>成交量</StatLabel>
            <StatValue>
              29.99<small>万</small>
            </StatValue>
          </Stat>
          <Stat>
            <StatLabel>成交额</StatLabel>
            <StatValue>
              4.23<small>亿</small>
            </StatValue>
          </Stat>
        </StatColumn>
        <ExpandButton>
          <svg width="22" height="20" viewBox="0 0 22 20" fill="none" strokeWidth="2.600" strokeLinecap="round">
            <path d="M3 3l8 5 8-5" stroke="#bbb" />
            <path d="M3 12l8 5 8-5" stroke="#8e8e8e" />
          </svg>
        </ExpandButton>
      </Stats>

      <AlertStrip>
        <RobotIcon />
        <AlertText>14:56 大单卖出1089手</AlertText>
        <AlertCount>5</AlertCount>
        <Caret w={31} h={14} color={GRAY} stroke={3} />
      </AlertStrip>

      <PeriodTabs>
        {PERIODS.map((name) => (
          <PeriodTab key={name} $active={name === period} onClick={() => setPeriod(name)}>
            {name}
          </PeriodTab>
        ))}
        <PeriodIcon $top={45}>
          <Caret w={16} h={9} color={GRAY} stroke={2.6} />
        </PeriodIcon>
        <PeriodIcon $top={26}>
          <GearIcon />
        </PeriodIcon>
      </PeriodTabs>

      <Body>
        <ChartColumn>
          <ChartToolbar $h={96}>
            <Dropdown $w={194} $large>
              <span>分时叠加</span>
              <Caret />
            </Dropdown>
            <Legend $left={150}>
              现手
              <LegendNumber $strong>4060</LegendNumber>
              均价
              <LegendNumber>14.11</LegendNumber>
            </Legend>
          </ChartToolbar>
          <PriceChart />
          <ChartToolbar $h={60}>
            <Dropdown $w={221}>
              <span>分时成交量</span>
              <Caret />
            </Dropdown>
            <Legend $left={30} $small>
              <IndicatorValue $color="#e6ab26">量:4060</IndicatorValue>
              <IndicatorValue $color="#e56b6d">额:546.88万</IndicatorValue>
            </Legend>
          </ChartToolbar>
          <VolumeChart />
          <ChartToolbar $h={60}>
            <Dropdown $w={122}>
              <span>量比</span>
              <Caret />
            </Dropdown>
            <Legend $left={30} $small>
              <IndicatorValue $color="#e6ab26">0.90</IndicatorValue>
            </Legend>
          </ChartToolbar>
          <RatioChart />
          <TimeAxis>
            <span>09:15</span>
            <span>09:25/09:30</span>
            <span>11:30/13:00</span>
            <span>15:00</span>
          </TimeAxis>
        </ChartColumn>

        <OrderBook>
          <BookTabs>
            {BOOK_VIEWS.map((name) => (
              <BookTab key={name} $active={name === bookView} onClick={() => setBookView(name)}>
                {name}
              </BookTab>
            ))}
          </BookTabs>
          <UnitSwitch>
            {UNITS.map((name) => (
              <Unit key={name} $active={name === unit} onClick={() => setUnit(name)}>
                {name}
              </Unit>
            ))}
          </UnitSwitch>
          <BookLevels side="卖" levels={ASKS} />
          <Balance />
          <BookLevels side="买" levels={BIDS} />
        </OrderBook>
      </Body>

      <Chips>
        <VipChip>
          <VipMark>VIP</VipMark>
          决策
        </VipChip>
        <Chip $w={240} $left={27}>早盘强势股</Chip>
        <Chip $w={204}>短线出击</Chip>
        <Chip $w={216}>
          学炒股
          <FlameIcon />
        </Chip>
      </Chips>
      <Fade />

      <BottomBar>
        <IndexQuote>
          <IndexCaret>
            <Caret w={19} h={9} color="#8e8e8e" stroke={3} up />
          </IndexCaret>
          <IndexValue>3900.50</IndexValue>
          <IndexInfo>
            上证
            <span>-0.23%</span>
          </IndexInfo>
        </IndexQuote>
        <TradeCell>
          <TradeButton $from="#fd9284" $to="#f83b4a">闪买</TradeButton>
        </TradeCell>
        <TradeCell>
          <TradeButton $from="#84a3fb" $to="#1a56cc">闪卖</TradeButton>
        </TradeCell>
        <TradeCell>
          <TradeButton $from="#8a90a4" $to="#586176">撤</TradeButton>
        </TradeCell>
        <TradeCell $menu>
          <svg width="52" height="12" viewBox="0 0 52 12" fill="#919191">
            <circle cx="5" cy="6" r="4.700" />
            <circle cx="26" cy="6" r="4.700" />
            <circle cx="47" cy="6" r="4.700" />
          </svg>
        </TradeCell>
      </BottomBar>
    </Screen>
  );
}
